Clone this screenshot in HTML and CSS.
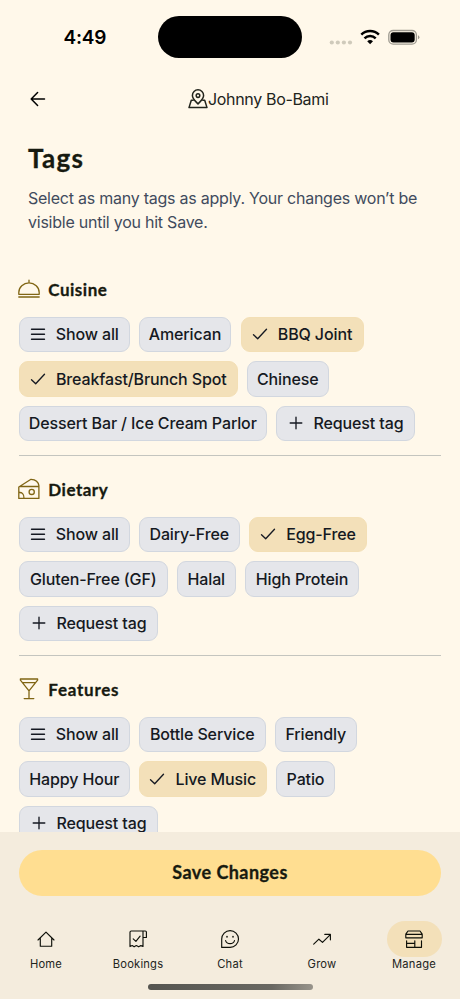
FILE: index.html
```html
<!DOCTYPE html>
<html lang="en">
<head>
<meta charset="utf-8">
<meta name="viewport" content="width=device-width, initial-scale=1">
<title>Tags</title>
<link rel="stylesheet" href="styles.css">
</head>
<body>
<svg class="defs" aria-hidden="true">
  <symbol id="menu" viewBox="0 0 16 16"><path d="M1.500 3.200h13M1.500 8.200h13M1.500 13.200h13"/></symbol>
  <symbol id="check" viewBox="0 0 16 16"><path d="M1.500 8.800l4.200 4L14.500 3.300"/></symbol>
  <symbol id="plus" viewBox="0 0 16 16"><path d="M8 2.200v11.600M2.200 8h11.600"/></symbol>
</svg>
<div class="phone">
  <div class="status">
    <span class="time">4:49</span>
    <span class="island"></span>
    <svg class="indicators" viewBox="0 0 92 18" aria-hidden="true">
      <g fill="#cfcabb"><circle cx="3.8" cy="14.5" r="2.1"/><circle cx="9.8" cy="14.5" r="2.1"/><circle cx="15.900" cy="14.500" r="2.1"/><circle cx="22" cy="14.500" r="2.1"/></g>
      <g fill="none" stroke="#000" stroke-width="2.500" stroke-linecap="butt"><path d="M33.300 6.700a12.600 12.600 0 0 1 17.600 0"/><path d="M36.500 10.300a8 8 0 0 1 11.200 0"/></g>
      <path d="M39.200 13.200a4.500 4.500 0 0 1 5.800 0L42.100 16.200z"/>
      <rect x="60.800" y="2.500" width="27.600" height="13.600" rx="4.400" fill="none" stroke="#9f9b91"/>
      <rect x="62.500" y="4.200" width="24.200" height="10.300" rx="2.900"/>
      <path d="M90 7.300q1.400.7 1.400 2t-1.400 2z" fill="#9f9b91"/>
    </svg>
  </div>
  <header class="topbar">
    <svg class="back" viewBox="0 0 16 16"><path d="M14.500 8h-13M7.600 1.500L1.200 8l6.400 6.500"/></svg>
    <svg class="place" viewBox="0 0 20 20"><path d="M10 15C7.200 11.800 4.400 9.700 4.400 6.400a5.600 5.600 0 0 1 11.200 0c0 3.300-2.800 5.400-5.600 8.600z"/><circle cx="10" cy="6.600" r="1.800"/><path d="M5.200 11.200H3.300L1 18.600h18l-2.300-7.400h-1.900"/></svg>
    <span class="venue">Johnny Bo-Bami</span>
  </header>
  <main>
    <div class="intro">
      <h1>Tags</h1>
      <p>Select as many tags as apply. Your changes won’t be<br>visible until you hit Save.</p>
    </div>
    <section>
      <h2><svg viewBox="0 0 22 22"><path d="M.8 16.300v-1.800a10.200 9.600 0 0 1 20.400 0v1.800zM.8 19h20.400M11 2.200v2.500"/></svg><span>Cuisine</span></h2>
      <div class="chips">
        <span class="chip w-show"><svg><use href="#menu"/></svg>Show all</span>
        <span class="chip w-american">American</span>
        <span class="chip on w-bbq"><svg><use href="#check"/></svg>BBQ Joint</span>
        <span class="chip on w-brunch"><svg><use href="#check"/></svg>Breakfast/Brunch Spot</span>
        <span class="chip w-chinese">Chinese</span>
        <span class="chip w-dessert">Dessert Bar / Ice Cream Parlor</span>
        <span class="chip w-request"><svg><use href="#plus"/></svg>Request tag</span>
      </div>
    </section>
    <section>
      <h2><svg viewBox="0 0 22 22"><path d="M.8 9L13 1.300q7.200.4 7.900 6.400v12.700H.8zM2 8.500h18.900M.8 14.600c3-.6 5.500 1.400 5.200 5.800"/><circle cx="13.700" cy="13.900" r="2.600"/></svg><span>Dietary</span></h2>
      <div class="chips">
        <span class="chip w-show"><svg><use href="#menu"/></svg>Show all</span>
        <span class="chip w-dairy">Dairy-Free</span>
        <span class="chip on w-egg"><svg><use href="#check"/></svg>Egg-Free</span>
        <span class="chip w-gluten">Gluten-Free (GF)</span>
        <span class="chip w-halal">Halal</span>
        <span class="chip w-protein">High Protein</span>
        <span class="chip w-request"><svg><use href="#plus"/></svg>Request tag</span>
      </div>
    </section>
    <section>
      <h2><svg viewBox="0 0 22 22"><path d="M2.400 1h17.200v1.200L11 12.900 2.400 2.200zM4.900 4.700h12.200M11 13v7.500M6.200 20.600h9.600"/></svg><span class="features">Features</span></h2>
      <div class="chips">
        <span class="chip w-show"><svg><use href="#menu"/></svg>Show all</span>
        <span class="chip w-bottle">Bottle Service</span>
        <span class="chip w-friendly">Friendly</span>
        <span class="chip w-show">Happy Hour</span>
        <span class="chip on w-live"><svg><use href="#check"/></svg>Live Music</span>
        <span class="chip w-patio">Patio</span>
        <span class="chip w-request"><svg><use href="#plus"/></svg>Request tag</span>
      </div>
    </section>
  </main>
  <footer>
    <button class="save"><span>Save Changes</span></button>
    <nav>
      <a><i><svg viewBox="0 0 20 20"><path d="M2 11l8-7.900 8 7.900M4.300 9v8.200h11.400V9"/></svg></i>Home</a>
      <a><i><svg viewBox="0 0 20 20"><path d="M15 2v15.500l-2.100-.9-2.200 1.200-2.400-1.200-2.200 1.200-1.900-1.200-2.200 1V3.300Q2 2 3.300 2h14q1.100 0 1.100 1.100v5.400H15M5.200 9.900l2.700 2.500 4.200-5.300"/></svg></i>Bookings</a>
      <a><i><svg viewBox="0 0 20 20"><path d="M1.700 18.400V10a8.400 8.400 0 1 1 8.400 8.400zM5.600 11.600c1.200 4 7.700 4 8.900 0"/><path d="M7 7.600v.3M13 7.600v.3" stroke-width="1.500"/></svg></i>Chat</a>
      <a><i><svg viewBox="0 0 20 20"><path d="M1.700 15.200l5.200-5 3.600 3.200 7.800-7.800M12.800 5.400h5.600v5.400"/></svg></i>Grow</a>
      <a><i class="active"><svg viewBox="0 0 20 20"><path d="M4 2h12l2.200 3.200v3.600H1.800V5.200zM1.800 5.300h16.400M2.600 11.800v6.500h14.900v-6.500M2.600 14.400h8.200M10.800 11.800v6.500"/></svg></i>Manage</a>
    </nav>
    <div class="home-bar"></div>
  </footer>
</div>
</body>
</html>
```
FILE: styles.css
```css
* { box-sizing: border-box; }
body { margin: 0; background: #fff8ea; font-family: Inter, sans-serif; color: #151922; }
svg { fill: none; stroke: currentColor; stroke-width: 1.35; stroke-linecap: round; stroke-linejoin: round; flex: none; }
.defs { display: none; }
.phone { width: 460px; height: 999px; overflow: hidden; display: flex; flex-direction: column; }
.status { height: 74px; flex: none; display: grid; grid-template-columns: 158px 144px 158px; align-items: center; }
.time { padding: 1px 0 0 63.500px; font-size: 19px; font-weight: 600; color: #000; letter-spacing: -.2px; }
.island { height: 42px; border-radius: 21px; background: #000; }
.indicators { width: 92px; height: 18px; margin-left: 26px; fill: #000; stroke: none; }
.topbar { height: 50px; flex: none; display: flex; align-items: center; color: #22241c; }
.back { width: 16px; height: 16px; margin-left: 30px; color: #000; stroke-width: 1.5; }
.place { width: 20px; height: 20px; margin-left: 141.500px; stroke-width: 1.5; }
.venue { font-size: 16px; letter-spacing: -.33px; margin-left: .5px; white-space: nowrap; }
main { flex: 1; min-height: 0; overflow: hidden; }
.intro { padding: 17px 28px 0; height: 147px; }
h1, h2, .save { font-family: Lato, sans-serif; font-weight: 700; color: #171a10; -webkit-text-stroke: .3px #171a10; }
h1 { margin: 0; font-size: 26px; line-height: 34px; letter-spacing: 1.3px; }
p { margin: 11px 0 0; font-size: 16px; line-height: 24px; letter-spacing: -.24px; color: #414b5d; white-space: nowrap; }
section { margin: 0 19px; height: 200px; padding-top: 5px; }
section:not(:last-child) .chips { border-bottom: 1px solid #c4c5bf; }
h2 { margin: 0; height: 26px; display: flex; align-items: center; gap: 8px; font-size: 17px; letter-spacing: .5px; }
h2 svg { width: 22px; height: 22px; margin-left: -.7px; color: #806514; stroke-width: 1.3; }
.features { letter-spacing: .75px; }
.chips { display: flex; flex-wrap: wrap; align-content: flex-start; gap: 9px 9.500px; height: 139.500px; margin-top: 14.500px; }
.chip { height: 35.600px; display: flex; align-items: center; justify-content: center; gap: 10px; border: 1px solid #d2d7df; border-radius: 9px; background: #e5e6ea; font-size: 16px; font-weight: 500; letter-spacing: -.12px; white-space: nowrap; }
.chip svg { width: 16px; height: 16px; }
.chip.on { background: #f3e0b9; border-color: #f3dfb5; }
.w-show { width: 110.500px; }
.w-american { width: 92px; }
.w-bbq { width: 123px; }
.w-brunch { width: 218.500px; }
.w-chinese { width: 81.500px; }
.w-dessert { width: 247.500px; }
.w-request { width: 139px; }
.w-dairy { width: 100.500px; }
.w-egg { width: 118px; }
.w-gluten { width: 148.500px; }
.w-halal { width: 58.500px; }
.w-protein { width: 114px; }
.w-bottle { width: 126.500px; }
.w-friendly { width: 81.500px; }
.w-live { width: 127.500px; }
.w-patio { width: 59px; }
footer { height: 167px; flex: none; background: #f4ecdd; padding-top: 18px; }
.save { display: flex; align-items: center; justify-content: center; width: 422px; height: 46px; margin: 0 19px; padding: 0 0 3px; border: 0; border-radius: 23px; background: #ffde91; font-size: 18px; letter-spacing: .45px; }
nav { display: flex; margin-top: 25px; height: 52px; }
nav a { width: 92px; display: flex; flex-direction: column; align-items: center; font-size: 11.200px; line-height: 14px; letter-spacing: .2px; color: #22241c; }
nav i { width: 55px; height: 36px; border-radius: 18px; display: flex; align-items: center; justify-content: center; color: #0d0f08; }
nav i svg { width: 20px; height: 20px; stroke-width: 1.15; }
nav .active { background: #f3e0b9; }
.home-bar { width: 165px; height: 6px; margin: 11px auto 0; border-radius: 3px; background: linear-gradient(90deg, #555550, #696862 75%, #98948b); }
```
